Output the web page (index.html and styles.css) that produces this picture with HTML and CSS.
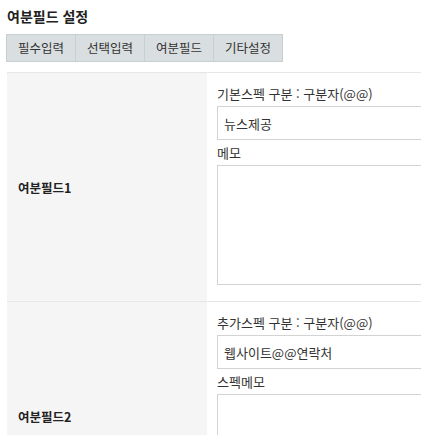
FILE: index.html
```html
<!DOCTYPE html>
<html lang="ko">
<head>
<meta charset="utf-8">
<title>여분필드 설정</title>
<link rel="stylesheet" href="styles.css">
</head>
<body>
<div class="page">
  <h2 class="title">여분필드 설정</h2>
  <div class="tabs">
    <div class="tab">필수입력</div>
    <div class="tab">선택입력</div>
    <div class="tab">여분필드</div>
    <div class="tab">기타설정</div>
  </div>
  <div class="table">
    <div class="row">
      <div class="head">여분필드1</div>
      <div class="cell">
        <div class="label">기본스펙 구분 : 구분자(@@)</div>
        <input class="input" type="text" value="뉴스제공">
        <div class="label">메모</div>
        <textarea class="area"></textarea>
      </div>
    </div>
    <div class="row">
      <div class="head">여분필드2</div>
      <div class="cell">
        <div class="label">추가스펙 구분 : 구분자(@@)</div>
        <input class="input" type="text" value="웹사이트@@연락처">
        <div class="label">스펙메모</div>
        <textarea class="area"></textarea>
      </div>
    </div>
  </div>
</div>
</body>
</html>
```

FILE: styles.css
```css
html, body {
  margin: 0;
  padding: 0;
  background: #fff;
  overflow: hidden;
}
body {
  font-family: "Noto Sans CJK KR", "Noto Sans", sans-serif;
  color: #333;
  font-size: 12px;
}
.page {
  padding: 7px 0 0 7px;
  width: 700px;
}
.title {
  margin: 0;
  font-size: 14px;
  line-height: 18px;
  font-weight: bold;
  color: #222;
}
.tabs {
  display: flex;
  margin: 9px 0 0 -1px;
  width: 275px;
  border: 1px solid #c9ced1;
  background: #d9dee1;
}
.tab {
  width: 69px;
  height: 26px;
  line-height: 26px;
  text-align: center;
  font-size: 12.5px;
  color: #333;
  border-left: 1px solid #c9ced1;
}
.tab:first-child {
  border-left: none;
}
.table {
  margin-top: 10px;
}
.row {
  display: grid;
  grid-template-columns: 200px 1fr;
  border-top: 1px solid #e6e6e6;
}
.head {
  background: #f5f5f5;
  display: flex;
  align-items: center;
  padding-left: 11px;
  font-weight: bold;
  font-size: 12.5px;
  color: #222;
}
.cell {
  display: flex;
  flex-direction: column;
  padding: 12px 10px 16px 10px;
}
.label {
  font-size: 13px;
  line-height: 18px;
  margin-bottom: 3px;
  color: #333;
}
.input {
  box-sizing: border-box;
  height: 34px;
  margin: 0 0 4px 0;
  padding: 0 6px;
  border: 1px solid #d3d3d3;
  font-family: inherit;
  font-size: 13px;
  color: #333;
  outline: none;
}
.area {
  box-sizing: border-box;
  height: 120px;
  margin: 0;
  border: 1px solid #d3d3d3;
  resize: none;
  font-family: inherit;
  outline: none;
}
```
